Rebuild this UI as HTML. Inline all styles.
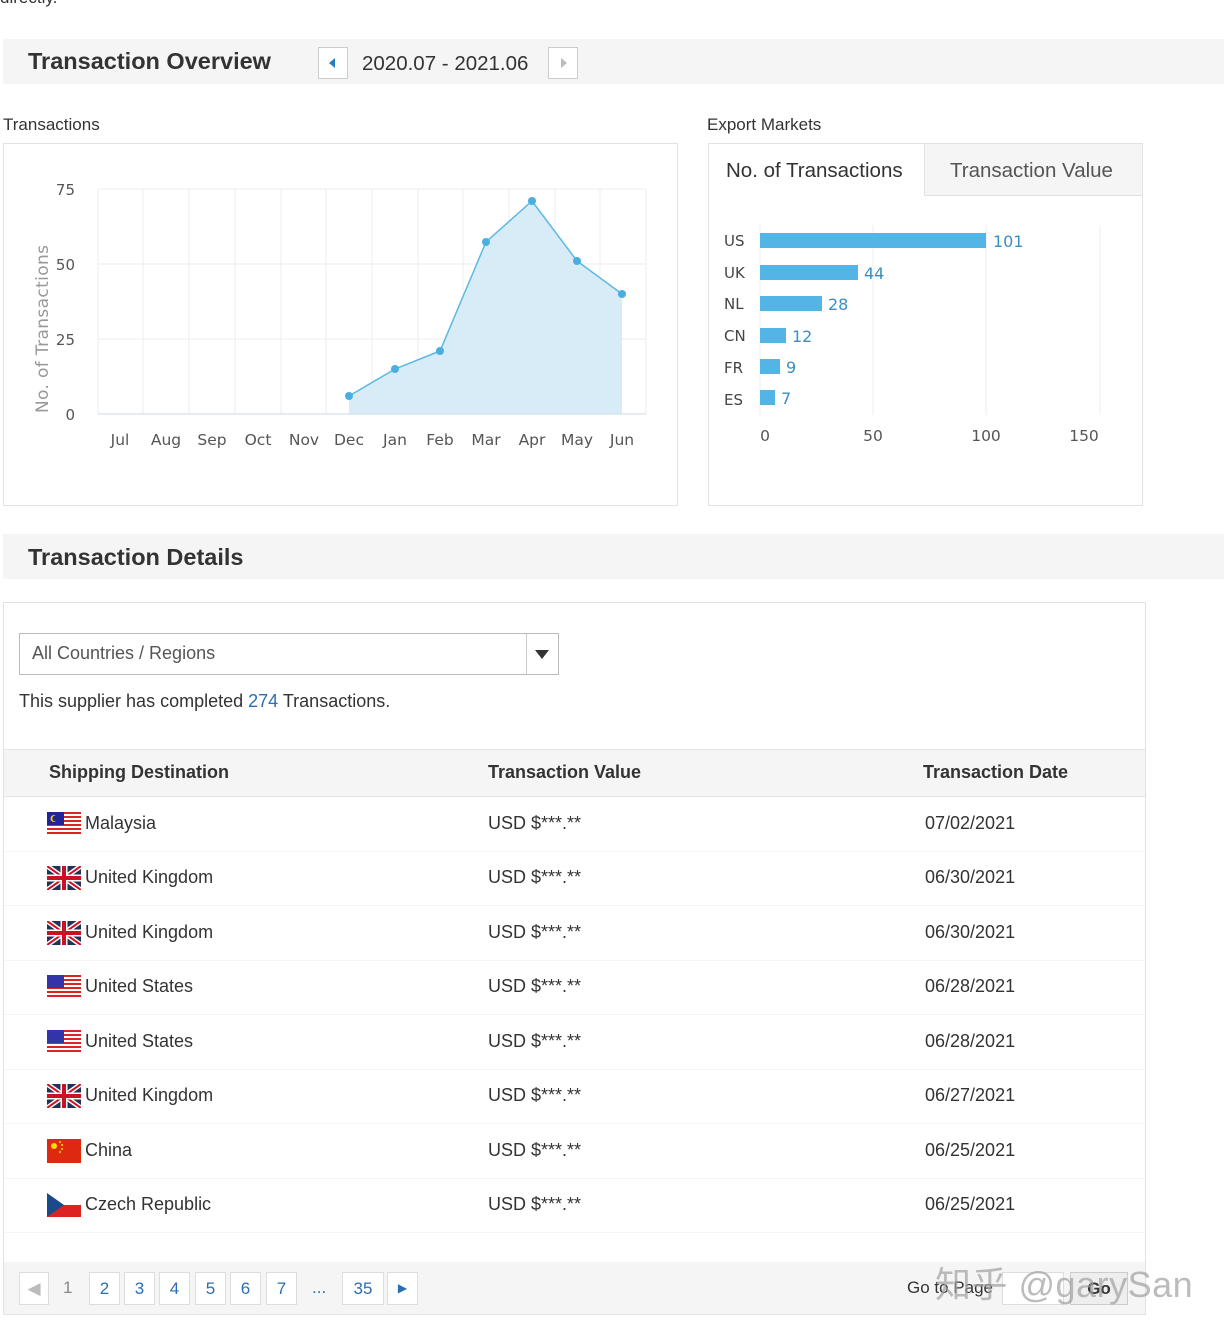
<!DOCTYPE html>
<html><head><meta charset="utf-8"><style>
*{margin:0;padding:0;box-sizing:border-box}
body{width:1224px;height:1330px;background:#fff;font-family:"Liberation Sans",Arial,sans-serif;color:#333;position:relative;overflow:hidden}
.a{position:absolute}
.bar{background:#f5f5f5}
.h{font-weight:bold;font-size:23.5px;color:#333}
.pg{position:absolute;top:1272px;height:33px;border:1px solid #ddd;background:#fff;color:#2a6fb3;font-size:17px;text-align:center;line-height:31px}
.row{position:absolute;left:4px;width:1141px;height:55px;border-bottom:1px solid #f5f5f5}
.row span{position:absolute;top:16px;font-size:18px;color:#333}
.row svg{position:absolute;left:43px;top:15px}
</style></head><body>
<div class="a" style="left:0;top:-12px;font-size:17px;color:#333">directly.</div>

<div class="a bar" style="left:3px;top:39px;width:1221px;height:45px"></div>
<div class="a h" style="left:28px;top:48px">Transaction Overview</div>
<div class="a" style="left:318px;top:47px;width:30px;height:32px;border:1px solid #ccc;background:#fff"><div class="a" style="left:10px;top:10px;width:0;height:0;border-top:5px solid transparent;border-bottom:5px solid transparent;border-right:6px solid #2a7dc0"></div></div>
<div class="a" style="left:362px;top:52px;font-size:20.5px;color:#333">2020.07 - 2021.06</div>
<div class="a" style="left:548px;top:47px;width:30px;height:32px;border:1px solid #ccc;background:#fff"><div class="a" style="left:12px;top:10px;width:0;height:0;border-top:5px solid transparent;border-bottom:5px solid transparent;border-left:6px solid #bbb"></div></div>

<div class="a" style="left:3px;top:115px;font-size:17px">Transactions</div>
<div class="a" style="left:3px;top:143px;width:675px;height:363px;border:1px solid #e2e2e2"></div>
<svg class="a" style="left:0;top:0" width="700" height="510">
<g stroke="#ececec" stroke-width="1">
<line x1="98" y1="189" x2="646" y2="189"/><line x1="98" y1="264" x2="646" y2="264"/><line x1="98" y1="339" x2="646" y2="339"/>
<line x1="98" y1="189" x2="98" y2="414"/><line x1="143" y1="189" x2="143" y2="414"/><line x1="189" y1="189" x2="189" y2="414"/><line x1="235" y1="189" x2="235" y2="414"/><line x1="281" y1="189" x2="281" y2="414"/><line x1="326" y1="189" x2="326" y2="414"/><line x1="372" y1="189" x2="372" y2="414"/><line x1="418" y1="189" x2="418" y2="414"/><line x1="463" y1="189" x2="463" y2="414"/><line x1="509" y1="189" x2="509" y2="414"/><line x1="555" y1="189" x2="555" y2="414"/><line x1="600" y1="189" x2="600" y2="414"/><line x1="646" y1="189" x2="646" y2="414"/>
</g>
<polygon points="349,414 349,396 395,369 440,351 486,242 532,201 577,261 622,294 622,414" fill="#d8ecf8"/>
<line x1="98" y1="414" x2="646" y2="414" stroke="#c9dbe8"/>
<polyline points="349,396 395,369 440,351 486,242 532,201 577,261 622,294" fill="none" stroke="#5bb9e2" stroke-width="1.5"/>
<g fill="#4aaee0"><circle cx="349" cy="396" r="4"/><circle cx="395" cy="369" r="4"/><circle cx="440" cy="351" r="4"/><circle cx="486" cy="242" r="4"/><circle cx="532" cy="201" r="4"/><circle cx="577" cy="261" r="4"/><circle cx="622" cy="294" r="4"/></g>
<g font-family="DejaVu Sans, sans-serif" font-size="15" fill="#555" text-anchor="end">
<text x="75" y="195">75</text><text x="75" y="270">50</text><text x="75" y="345">25</text><text x="75" y="420">0</text></g>
<text transform="translate(48,413) rotate(-90)" font-family="DejaVu Sans, sans-serif" font-size="17" fill="#999" textLength="168">No. of Transactions</text>
<g font-family="DejaVu Sans, sans-serif" font-size="15.5" fill="#555" text-anchor="middle">
<text x="120" y="445">Jul</text><text x="166" y="445">Aug</text><text x="212" y="445">Sep</text><text x="258" y="445">Oct</text><text x="304" y="445">Nov</text><text x="349" y="445">Dec</text><text x="395" y="445">Jan</text><text x="440" y="445">Feb</text><text x="486" y="445">Mar</text><text x="532" y="445">Apr</text><text x="577" y="445">May</text><text x="622" y="445">Jun</text></g>
</svg>

<div class="a" style="left:707px;top:115px;font-size:17px">Export Markets</div>
<div class="a" style="left:708px;top:143px;width:435px;height:363px;border:1px solid #e2e2e2"></div>
<div class="a" style="left:924px;top:144px;width:218px;height:52px;background:#f5f5f5;border-left:1px solid #e2e2e2;border-bottom:1px solid #e2e2e2"></div>
<div class="a" style="left:726px;top:159px;font-size:20.5px;color:#333">No. of Transactions</div>
<div class="a" style="left:950px;top:159px;font-size:20.5px;color:#555">Transaction Value</div>
<svg class="a" style="left:700px;top:200px" width="450" height="260">
<g stroke="#eee"><line x1="60" y1="25" x2="60" y2="215"/><line x1="173" y1="25" x2="173" y2="215"/><line x1="286" y1="25" x2="286" y2="215"/><line x1="400" y1="25" x2="400" y2="215"/></g>
<g fill="#52b5e5"><rect x="60" y="33" width="226" height="15"/><rect x="60" y="65" width="98" height="15"/><rect x="60" y="96" width="62" height="15"/><rect x="60" y="128" width="26" height="15"/><rect x="60" y="159" width="20" height="15"/><rect x="60" y="190" width="15" height="15"/></g>
<g font-family="DejaVu Sans, sans-serif" font-size="15" fill="#444"><text x="24" y="46">US</text><text x="24" y="78">UK</text><text x="24" y="109">NL</text><text x="24" y="141">CN</text><text x="24" y="173">FR</text><text x="24" y="205">ES</text></g>
<g font-family="DejaVu Sans, sans-serif" font-size="16" fill="#3a8fc4"><text x="293" y="47">101</text><text x="164" y="79">44</text><text x="128" y="110">28</text><text x="92" y="142">12</text><text x="86" y="173">9</text><text x="81" y="204">7</text></g>
<g font-family="DejaVu Sans, sans-serif" font-size="15.5" fill="#555" text-anchor="middle"><text x="65" y="241">0</text><text x="173" y="241">50</text><text x="286" y="241">100</text><text x="384" y="241">150</text></g>
</svg>

<div class="a bar" style="left:3px;top:534px;width:1221px;height:45px"></div>
<div class="a h" style="left:28px;top:544px">Transaction Details</div>

<div class="a" style="left:3px;top:602px;width:1143px;height:713px;border:1px solid #e2e2e2"></div>
<div class="a" style="left:19px;top:633px;width:540px;height:42px;border:1px solid #bbb"></div>
<div class="a" style="left:526px;top:634px;width:1px;height:40px;background:#ccc"></div>
<div class="a" style="left:535px;top:650px;width:0;height:0;border-left:7px solid transparent;border-right:7px solid transparent;border-top:9px solid #333"></div>
<div class="a" style="left:32px;top:643px;font-size:18px;color:#555">All Countries / Regions</div>
<div class="a" style="left:19px;top:691px;font-size:18px;color:#333">This supplier has completed <span style="color:#2a6fb3">274</span> Transactions.</div>

<div class="a" style="left:4px;top:749px;width:1141px;height:48px;background:#f5f5f5;border-top:1px solid #e6e6e6;border-bottom:1px solid #e6e6e6"></div>
<div class="a" style="left:49px;top:762px;font-size:18px;font-weight:bold">Shipping Destination</div>
<div class="a" style="left:488px;top:762px;font-size:18px;font-weight:bold">Transaction Value</div>
<div class="a" style="left:923px;top:762px;font-size:18px;font-weight:bold">Transaction Date</div>

<svg width="0" height="0" style="position:absolute"><defs>
<g id="us"><rect width="34" height="24" fill="#fff"/><g fill="#d22"><rect y="0" width="34" height="2"/><rect y="4" width="34" height="2"/><rect y="8" width="34" height="2"/><rect y="12" width="34" height="2"/><rect y="16" width="34" height="2"/><rect y="20" width="34" height="2"/></g><rect width="17" height="13" fill="#33a"/></g>
<g id="my"><rect width="34" height="24" fill="#fff"/><g fill="#d22"><rect y="0" width="34" height="2"/><rect y="4" width="34" height="2"/><rect y="8" width="34" height="2"/><rect y="12" width="34" height="2"/><rect y="16" width="34" height="2"/><rect y="20" width="34" height="2"/></g><rect width="17" height="13" fill="#229"/><circle cx="7" cy="6.5" r="3.5" fill="#fc0"/><circle cx="8.3" cy="6.5" r="3" fill="#229"/></g>
<g id="uk"><rect width="34" height="24" fill="#235"/><path d="M0 0L34 24M34 0L0 24" stroke="#fff" stroke-width="5"/><path d="M0 0L34 24M34 0L0 24" stroke="#c12" stroke-width="2"/><path d="M17 0V24M0 12H34" stroke="#fff" stroke-width="7"/><path d="M17 0V24M0 12H34" stroke="#c12" stroke-width="4"/></g>
<g id="cn"><rect width="34" height="24" fill="#de2910"/><circle cx="7" cy="7" r="3" fill="#fd0"/><circle cx="13" cy="3" r="1" fill="#fd0"/><circle cx="15" cy="6" r="1" fill="#fd0"/><circle cx="15" cy="10" r="1" fill="#fd0"/><circle cx="13" cy="13" r="1" fill="#fd0"/></g>
<g id="cz"><rect width="34" height="12" fill="#fff"/><rect y="12" width="34" height="12" fill="#d22"/><path d="M0 0L17 12L0 24Z" fill="#1a4a8a"/></g>
</defs></svg>

<div class="row" style="top:797px"><svg width="34" height="24"><use href="#my"/></svg><span style="left:81px">Malaysia</span><span style="left:484px">USD $***.**</span><span style="left:921px">07/02/2021</span></div>
<div class="row" style="top:851px"><svg width="34" height="24"><use href="#uk"/></svg><span style="left:81px">United Kingdom</span><span style="left:484px">USD $***.**</span><span style="left:921px">06/30/2021</span></div>
<div class="row" style="top:906px"><svg width="34" height="24"><use href="#uk"/></svg><span style="left:81px">United Kingdom</span><span style="left:484px">USD $***.**</span><span style="left:921px">06/30/2021</span></div>
<div class="row" style="top:960px"><svg width="34" height="24"><use href="#us"/></svg><span style="left:81px">United States</span><span style="left:484px">USD $***.**</span><span style="left:921px">06/28/2021</span></div>
<div class="row" style="top:1015px"><svg width="34" height="24"><use href="#us"/></svg><span style="left:81px">United States</span><span style="left:484px">USD $***.**</span><span style="left:921px">06/28/2021</span></div>
<div class="row" style="top:1069px"><svg width="34" height="24"><use href="#uk"/></svg><span style="left:81px">United Kingdom</span><span style="left:484px">USD $***.**</span><span style="left:921px">06/27/2021</span></div>
<div class="row" style="top:1124px"><svg width="34" height="24"><use href="#cn"/></svg><span style="left:81px">China</span><span style="left:484px">USD $***.**</span><span style="left:921px">06/25/2021</span></div>
<div class="row" style="top:1178px"><svg width="34" height="24"><use href="#cz"/></svg><span style="left:81px">Czech Republic</span><span style="left:484px">USD $***.**</span><span style="left:921px">06/25/2021</span></div>

<div class="a bar" style="left:4px;top:1262px;width:1141px;height:52px"></div>
<div class="pg" style="left:19px;width:30px;color:#bbb">&#9664;</div>
<div class="a" style="left:63px;top:1278px;font-size:17px;color:#888">1</div>
<div class="pg" style="left:89px;width:31px">2</div>
<div class="pg" style="left:124px;width:31px">3</div>
<div class="pg" style="left:159px;width:31px">4</div>
<div class="pg" style="left:195px;width:31px">5</div>
<div class="pg" style="left:230px;width:31px">6</div>
<div class="pg" style="left:266px;width:31px">7</div>
<div class="a" style="left:312px;top:1278px;font-size:17px;color:#2a6fb3">...</div>
<div class="pg" style="left:342px;width:42px">35</div>
<div class="pg" style="left:387px;width:31px;font-size:12px">&#9654;</div>
<div class="a" style="left:907px;top:1278px;font-size:17px;color:#333">Go to Page</div>
<div class="a" style="left:1002px;top:1272px;width:62px;height:33px;border:1px solid #ddd;background:#fff"></div>
<div class="a" style="left:1070px;top:1272px;width:58px;height:33px;border:1px solid #ccc;background:#eee;font-weight:bold;font-size:17px;text-align:center;line-height:31px">Go</div>
<div class="a" style="left:935px;top:1256px;font-size:36px;color:rgba(160,160,160,0.7);font-family:'Liberation Sans','Noto Sans CJK SC',sans-serif;letter-spacing:0.5px">知乎 @garySan</div>
</body></html>
